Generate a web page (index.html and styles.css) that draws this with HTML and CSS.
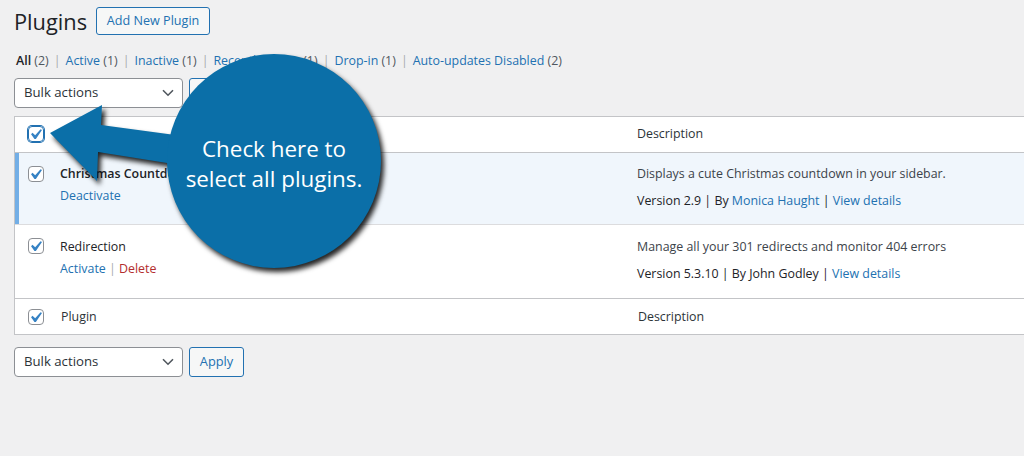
FILE: index.html
```html
<!DOCTYPE html>
<html lang="en">
<head>
<meta charset="utf-8">
<title>Plugins</title>
<link rel="stylesheet" href="styles.css">
</head>
<body>
<div class="wrap">
  <div class="title-row">
    <h1 class="page-title">Plugins</h1>
    <a class="btn add-new" href="#">Add New Plugin</a>
  </div>

  <ul class="subsubsub">
    <li class="current">All <span class="count">(2)</span></li>
    <li class="sep">|</li>
    <li><a href="#">Active <span class="count">(1)</span></a></li>
    <li class="sep">|</li>
    <li><a href="#">Inactive <span class="count">(1)</span></a></li>
    <li class="sep">|</li>
    <li><a href="#">Recently Active <span class="count">(1)</span></a></li>
    <li class="sep">|</li>
    <li><a href="#">Drop-in <span class="count">(1)</span></a></li>
    <li class="sep">|</li>
    <li><a href="#">Auto-updates Disabled <span class="count">(2)</span></a></li>
  </ul>

  <div class="tablenav top">
    <div class="select">
      <span>Bulk actions</span>
      <svg class="chev" width="12" height="8" viewBox="0 0 12 8"><path d="M1 1.2 L6 6.2 L11 1.2" fill="none" stroke="#50575e" stroke-width="1.6"/></svg>
    </div>
    <a class="btn apply" href="#">Apply</a>
  </div>

  <div class="plugins-table">
    <div class="row head">
      <div class="cell check">
        <span class="cb focus"><svg width="16" height="16" viewBox="0 0 16 16"><rect x="0.5" y="0.5" width="15" height="15" rx="3.5" fill="#fff" stroke="#2271b1"/><path transform="translate(-3,-2) scale(1.05)" fill="#3582c4" d="M14.83 4.89l1.34.94-5.81 8.38H9.020L5.78 9.67l1.34-1.25 2.57 2.4z"/></svg></span>
      </div>
      <div class="cell name">Plugin</div>
      <div class="cell desc">Description</div>
    </div>

    <div class="row plugin is-active">
      <div class="cell check">
        <span class="cb"><svg width="16" height="16" viewBox="0 0 16 16"><rect x="0.5" y="0.5" width="15" height="15" rx="3.5" fill="#fff" stroke="#8c8f94"/><path transform="translate(-3,-2) scale(1.05)" fill="#3582c4" d="M14.83 4.89l1.34.94-5.81 8.38H9.02L5.78 9.67l1.34-1.25 2.57 2.4z"/></svg></span>
      </div>
      <div class="cell name">
        <strong class="ptitle">Christmas Countdown</strong>
        <div class="row-actions"><a href="#">Deactivate</a></div>
      </div>
      <div class="cell desc">
        <p class="dtext">Displays a cute Christmas countdown in your sidebar.</p>
        <p class="meta">Version 2.9 | By <a href="#">Monica Haught</a> | <a href="#">View details</a></p>
      </div>
    </div>

    <div class="row plugin last">
      <div class="cell check">
        <span class="cb"><svg width="16" height="16" viewBox="0 0 16 16"><rect x="0.5" y="0.5" width="15" height="15" rx="3.5" fill="#fff" stroke="#8c8f94"/><path transform="translate(-3,-2) scale(1.05)" fill="#3582c4" d="M14.83 4.89l1.34.94-5.81 8.38H9.02L5.78 9.67l1.34-1.25 2.57 2.4z"/></svg></span>
      </div>
      <div class="cell name">
        <span class="ptitle normal">Redirection</span>
        <div class="row-actions"><a href="#">Activate</a> <span class="sep">|</span> <a class="delete" href="#">Delete</a></div>
      </div>
      <div class="cell desc">
        <p class="dtext">Manage all your 301 redirects and monitor 404 errors</p>
        <p class="meta">Version 5.3.10 | By John Godley | <a href="#">View details</a></p>
      </div>
    </div>

    <div class="row foot">
      <div class="cell check">
        <span class="cb"><svg width="16" height="16" viewBox="0 0 16 16"><rect x="0.5" y="0.5" width="15" height="15" rx="3.5" fill="#fff" stroke="#8c8f94"/><path transform="translate(-3,-2) scale(1.05)" fill="#3582c4" d="M14.83 4.89l1.34.94-5.81 8.38H9.02L5.78 9.67l1.34-1.25 2.57 2.4z"/></svg></span>
      </div>
      <div class="cell name">Plugin</div>
      <div class="cell desc">Description</div>
    </div>
  </div>

  <div class="tablenav bottom">
    <div class="select">
      <span>Bulk actions</span>
      <svg class="chev" width="12" height="8" viewBox="0 0 12 8"><path d="M1 1.2 L6 6.2 L11 1.2" fill="none" stroke="#50575e" stroke-width="1.6"/></svg>
    </div>
    <a class="btn apply" href="#">Apply</a>
  </div>
</div>

<div class="callout">
  <svg class="callout-shape" width="1024" height="456" viewBox="0 0 1024 456">
    <g class="shadowed">
      <polygon fill="#0b6fa8" points="50,133 102,105 101,125 190,137 186,166 98,152 97,181"/>
      <circle cx="274" cy="161" r="107" fill="#0b6fa8"/>
    </g>
  </svg>
  <div class="callout-text">Check here to<br>select all plugins.</div>
</div>
</body>
</html>
```

FILE: styles.css
```css
* { box-sizing: border-box; }

html, body {
  margin: 0;
  padding: 0;
}

body {
  background: #f0f0f1;
  color: #3c434a;
  font-family: "Open Sans", "Noto Sans", sans-serif;
  font-size: 12.4px;
  line-height: 19.5px;
  width: 1024px;
  height: 456px;
  overflow: hidden;
  position: relative;
}

a { color: #2271b1; text-decoration: none; }

.wrap {
  padding: 7px 0 0 14px;
}

.title-row {
  display: flex;
  align-items: center;
  height: 28px;
}

.page-title {
  margin: 0 10px 0 0;
  font-size: 21.8px;
  font-weight: 400;
  line-height: 28px;
  color: #1d2327;
  position: relative;
  top: 1px;
}

.btn {
  display: inline-flex;
  align-items: center;
  justify-content: center;
  height: 28px;
  padding: 0 10px;
  border: 1px solid #2271b1;
  border-radius: 3px;
  background: #f6f7f7;
  color: #2271b1;
  font-size: 12.6px;
}
.add-new { width: 114px; padding: 0; margin-left: -1px; }

.subsubsub {
  list-style: none;
  margin: 16px 0 0 2px;
  padding: 0;
  display: flex;
  gap: 5px;
  line-height: 19.5px;
  color: #646970;
}

.subsubsub .current { color: #1d2327; font-weight: 600; }
.subsubsub .current .count { font-weight: 400; color: #50575e; }
.subsubsub .count { color: #50575e; }
.subsubsub .sep { color: #a7aaad; }

.tablenav {
  display: flex;
  align-items: center;
  gap: 6px;
  height: 30px;
}
.tablenav.top { margin-top: 7px; }
.tablenav.bottom { margin-top: 12px; }

.select {
  width: 169px;
  height: 30px;
  border: 1px solid #8c8f94;
  border-radius: 4px;
  background: #fff;
  display: flex;
  align-items: center;
  justify-content: space-between;
  padding: 0 8px 0 9px;
  color: #2c3338;
  font-size: 13.2px;
}

.apply {
  height: 30px;
  width: 55px;
  padding: 0;
  font-size: 12.8px;
}

.plugins-table {
  margin-top: 8px;
  border: 1px solid #c3c4c7;
  border-right: 0;
  background: #fff;
  width: 1030px;
}

.row {
  display: grid;
  grid-template-columns: 45px 577px 1fr;
}

.row.head {
  height: 36px;
  border-bottom: 1px solid #c3c4c7;
  align-items: center;
  color: #2c3338;
}

.row.foot {
  height: 35px;
  align-items: center;
  color: #2c3338;
  padding-top: 1px;
}

.row.plugin {
  height: 72px;
  border-bottom: 1px solid #dcdcde;
  padding-top: 11px;
}
.row.plugin.last {
  height: 74px;
  padding-top: 12px;
  border-bottom-color: #c3c4c7;
}

.row.plugin.is-active {
  background: #f0f6fc;
  box-shadow: inset 4px 0 0 #72aee6;
}

.cell.check {
  padding-left: 13px;
  display: flex;
}

.row.plugin .cell.check { padding-top: 2px; }
.row.plugin.last .cell.check { padding-top: 1px; }
.row.head .cell.check, .row.foot .cell.check { align-items: center; }

.cb {
  display: block;
  width: 16px;
  height: 16px;
  border-radius: 4px;
}
.cb svg { display: block; }
.cb.focus { box-shadow: 0 0 0 1px #2271b1; }

.row.foot .cell.name { padding-left: 1px; }
.row.foot .cell.desc { padding-left: 1px; }

.ptitle {
  display: block;
  color: #1d2327;
  font-weight: 600;
  line-height: 19.5px;
}
.ptitle.normal { font-weight: 400; }

.row-actions {
  margin-top: 3px;
  line-height: 19.5px;
  color: #a7aaad;
}
.row-actions .delete { color: #b32d2e; }

.dtext {
  margin: 0;
  line-height: 19.5px;
}
.meta {
  margin: 8px 0 0;
  line-height: 19.5px;
  color: #1d2327;
}

.callout {
  position: absolute;
  left: 0;
  top: 0;
  width: 1024px;
  height: 456px;
  pointer-events: none;
}

.callout-shape {
  position: absolute;
  left: 0;
  top: 0;
}

.shadowed {
  filter: drop-shadow(3px 4px 2.5px rgba(0, 0, 0, 0.85));
}

.callout-text {
  position: absolute;
  left: 167px;
  top: 134px;
  width: 214px;
  text-align: center;
  color: #fff;
  font-family: "Open Sans", "Noto Sans", sans-serif;
  font-size: 22.4px;
  line-height: 30px;
}
```
